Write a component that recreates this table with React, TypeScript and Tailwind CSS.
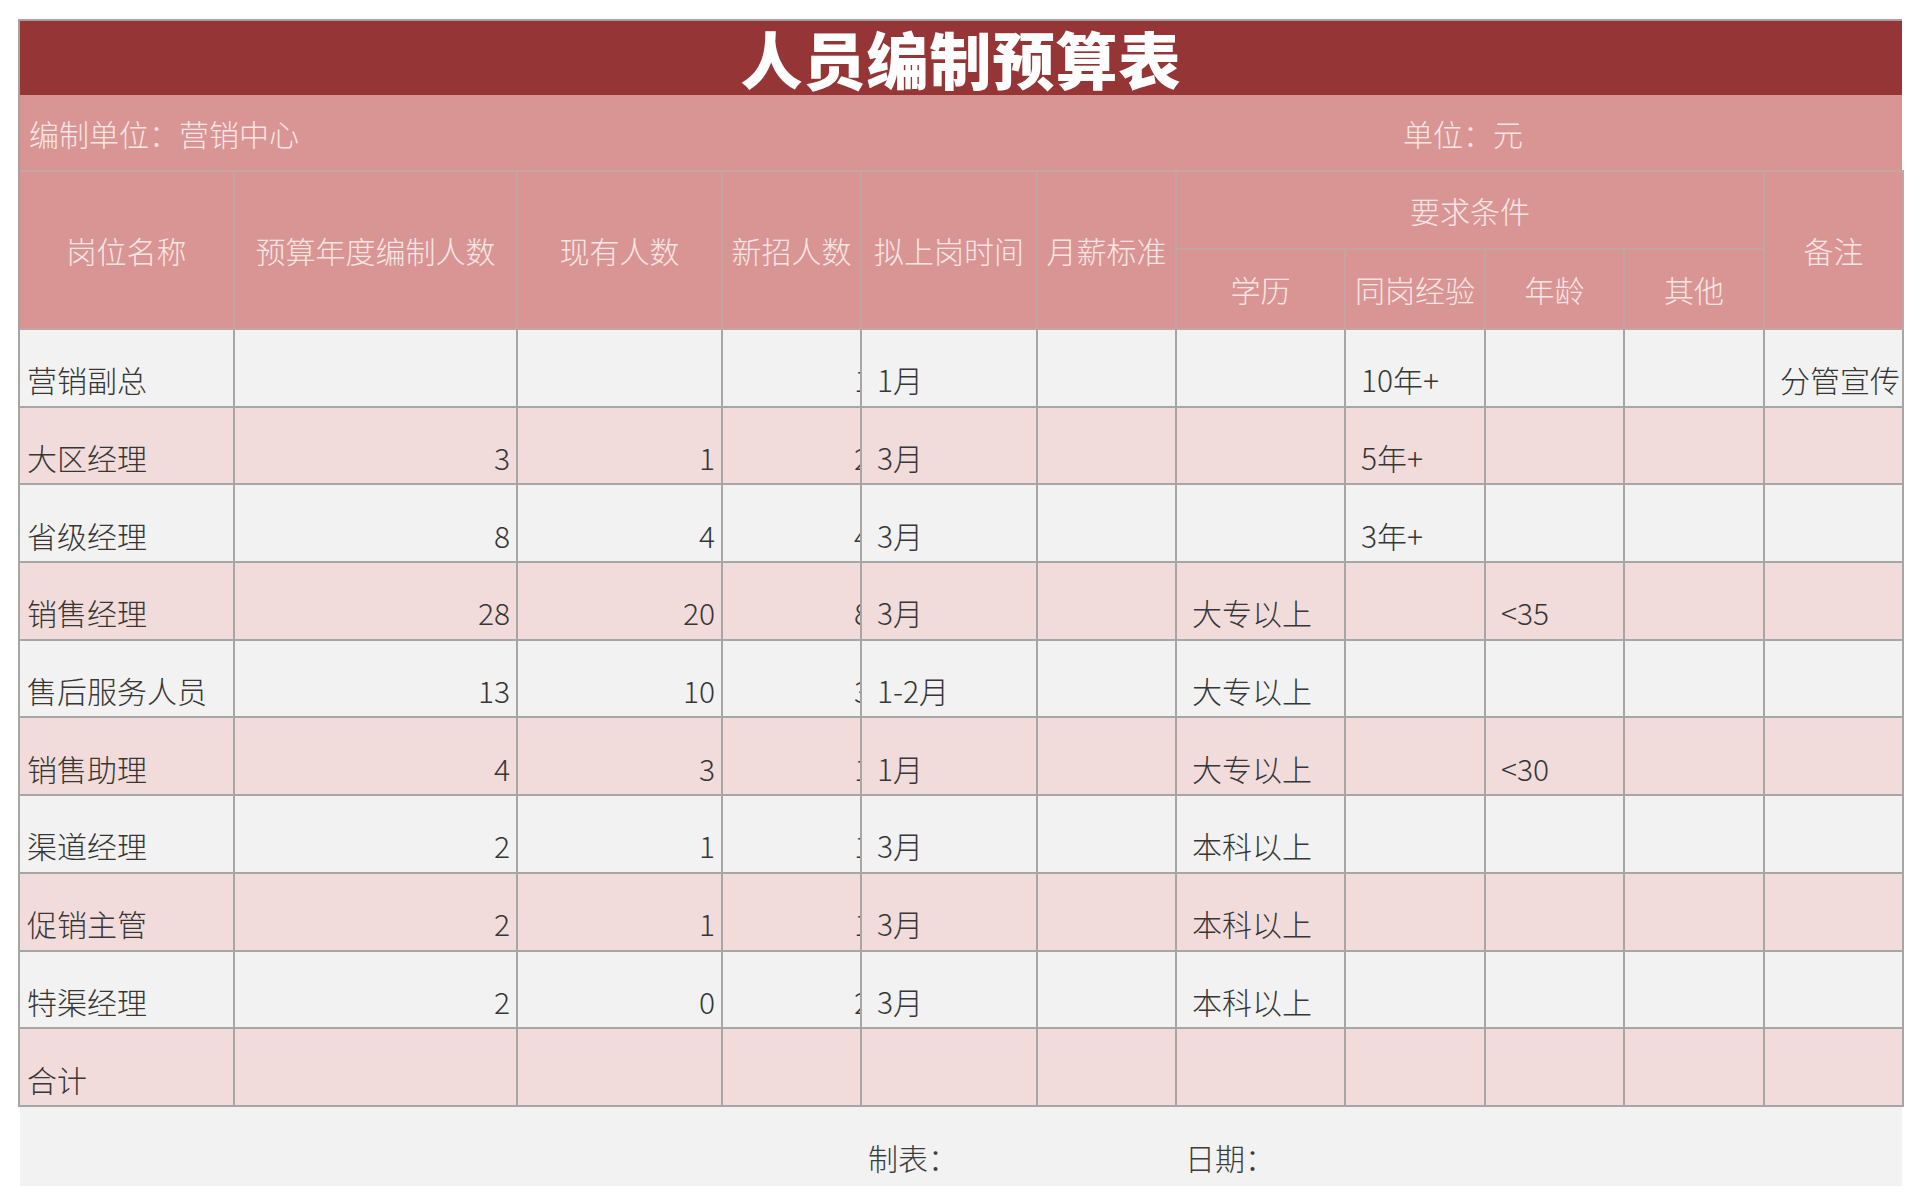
import React from "react";

const COLS =
  "grid grid-cols-[215px_283px_205px_139px_176px_139px_169px_140px_139px_140px_139px]";

type Row = string[];

const rows: Row[] = [
  ["营销副总", "", "", "1", "1月", "", "", "10年+", "", "", "分管宣传"],
  ["大区经理", "3", "1", "2", "3月", "", "", "5年+", "", "", ""],
  ["省级经理", "8", "4", "4", "3月", "", "", "3年+", "", "", ""],
  ["销售经理", "28", "20", "8", "3月", "", "大专以上", "", "<35", "", ""],
  ["售后服务人员", "13", "10", "3", "1-2月", "", "大专以上", "", "", "", ""],
  ["销售助理", "4", "3", "1", "1月", "", "大专以上", "", "<30", "", ""],
  ["渠道经理", "2", "1", "1", "3月", "", "本科以上", "", "", "", ""],
  ["促销主管", "2", "1", "1", "3月", "", "本科以上", "", "", "", ""],
  ["特渠经理", "2", "0", "2", "3月", "", "本科以上", "", "", "", ""],
  ["合计", "", "", "", "", "", "", "", "", "", ""],
];

function HeadCell({ children, className = "" }: { children?: React.ReactNode; className?: string }) {
  return (
    <div
      className={`flex items-center justify-center border-r-2 border-b-2 border-[#c4a3a3] text-[30px] leading-none text-[#f8e6e6] ${className}`}
    >
      {children}
    </div>
  );
}

function DataCell({ value, col }: { value: string; col: number }) {
  // 第一列左对齐，数字列右对齐，新招人数一列被右侧单元格遮住
  let align = "justify-start pl-[15px]";
  if (col === 0) align = "justify-start pl-[7px]";
  if (col === 1 || col === 2) align = "justify-end pr-[6px]";
  if (col === 3) align = "justify-end";

  return (
    <div
      className={`flex items-center overflow-hidden pt-[23px] border-r-2 border-b-2 border-[#a6a6a6] ${align}`}
    >
      <span className={`whitespace-nowrap ${col === 3 ? "-mr-[10px]" : ""}`}>{value}</span>
    </div>
  );
}

export default function App() {
  return (
    <div className="min-h-[1204px] bg-white pt-[19px] pl-[18px] font-['Noto_Sans_CJK_SC','Noto_Sans',sans-serif] font-light text-[#363636]">
      <div className="w-[1884px]">
        {/* 标题 */}
        <div className="flex h-[76px] items-center justify-center border-t-2 border-l-2 border-[#a8a0a0] bg-[#963535]">
          <h1 className="text-[62px] font-black leading-none tracking-[1px] text-white">人员编制预算表</h1>
        </div>

        {/* 编制单位 */}
        <div className={`${COLS} h-[77px] border-l-2 border-[#a8a0a0] bg-[#d99594] text-[30px] leading-none text-[#f8e6e6]`}>
          <div className="col-span-7 flex items-center pl-[9px] border-b-2 border-[#c9a3a3]">编制单位：营销中心</div>
          <div className="col-span-4 flex items-center pl-[57px] border-b-2 border-[#c9a3a3]">单位：元</div>
        </div>

        {/* 表头 */}
        <div className={`${COLS} grid-rows-[78px_80px] border-l-2 border-[#a8a0a0] bg-[#d99594]`}>
          <HeadCell className="row-span-2">岗位名称</HeadCell>
          <HeadCell className="row-span-2">预算年度编制人数</HeadCell>
          <HeadCell className="row-span-2">现有人数</HeadCell>
          <HeadCell className="row-span-2">新招人数</HeadCell>
          <HeadCell className="row-span-2">拟上岗时间</HeadCell>
          <HeadCell className="row-span-2">月薪标准</HeadCell>
          <HeadCell className="col-span-4">要求条件</HeadCell>
          <HeadCell className="row-span-2">备注</HeadCell>
          <HeadCell>学历</HeadCell>
          <HeadCell>同岗经验</HeadCell>
          <HeadCell>年龄</HeadCell>
          <HeadCell>其他</HeadCell>
        </div>

        {/* 数据 */}
        <div className="border-l-2 border-[#a6a6a6] text-[30px] leading-none">
          {rows.map((row, i) => (
            <div
              key={i}
              className={`${COLS} h-[77.7px] ${i % 2 === 0 ? "bg-[#f2f2f2]" : "bg-[#f2dcdb]"}`}
            >
              {row.map((v, j) => (
                <DataCell key={j} value={v} col={j} />
              ))}
            </div>
          ))}
        </div>

        {/* 制表 日期 */}
        <div className={`${COLS} h-[79px] ml-[2px] bg-[#f2f2f2] text-[30px] leading-none text-[#3c3c3c]`}>
          <div className="col-span-4" />
          <div className="col-span-2 flex items-center pt-[21px] pl-[6px]">制表：</div>
          <div className="col-span-5 flex items-center pt-[21px] pl-[8px]">日期：</div>
        </div>
      </div>
    </div>
  );
}
